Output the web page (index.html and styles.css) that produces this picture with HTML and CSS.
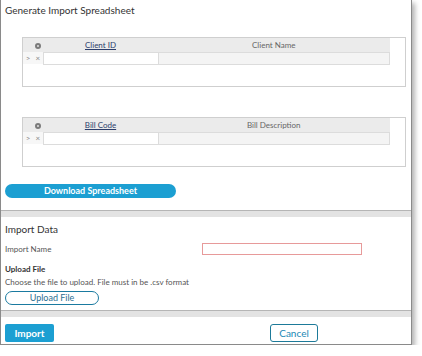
FILE: index.html
```html
<!DOCTYPE html>
<html>
  <head>
    <title>Import</title>
    <link rel="stylesheet" href="styles.css">
  </head>
  <body>
    <div class="dialog">
      <div class="section generate">
        <h2 class="title">Generate Import Spreadsheet</h2>

        <div class="grid-box">
          <table class="grid">
            <tr class="head">
              <th class="ctl"></th>
              <th class="ctl"><span class="gear"></span></th>
              <th class="col-a"><a href="#">Client ID</a></th>
              <th class="col-b">Client Name</th>
            </tr>
            <tr class="row">
              <td class="ctl">&gt;</td>
              <td class="ctl">&times;</td>
              <td class="cell-edit"></td>
              <td class="cell-ro"></td>
            </tr>
          </table>
        </div>

        <div class="grid-box second">
          <table class="grid">
            <tr class="head">
              <th class="ctl"></th>
              <th class="ctl"><span class="gear"></span></th>
              <th class="col-a"><a href="#">Bill Code</a></th>
              <th class="col-b">Bill Description</th>
            </tr>
            <tr class="row">
              <td class="ctl">&gt;</td>
              <td class="ctl">&times;</td>
              <td class="cell-edit"></td>
              <td class="cell-ro"></td>
            </tr>
          </table>
        </div>

        <button class="btn-pill">Download Spreadsheet</button>
      </div>

      <div class="divider"></div>

      <div class="section import">
        <h2 class="title">Import Data</h2>
        <div class="field-row">
          <label class="field-label">Import Name</label>
          <input class="text-input" type="text">
        </div>
        <div class="upload-label">Upload File</div>
        <div class="hint">Choose the file to upload. File must in be .csv format</div>
        <button class="btn-outline">Upload File</button>
      </div>

      <div class="divider"></div>

      <div class="footer">
        <button class="btn-primary">Import</button>
        <button class="btn-cancel">Cancel</button>
      </div>
    </div>
  </body>
</html>
```

FILE: styles.css
```css
body {
  margin: 0;
  background: #fff;
  font-family: Lato, "Liberation Sans", sans-serif;
  color: #333;
}
.dialog {
  width: 410px;
  border: 1px solid #8a8a8a;
  border-top: none;
  box-shadow: 3px 3px 5px rgba(0, 0, 0, 0.3);
  background: #fff;
}
.section {
  padding: 3px 4px 0 4px;
}
.title {
  margin: 0;
  font-size: 10px;
  font-weight: normal;
  line-height: 14px;
  color: #333;
}
.grid-box {
  margin: 20px 0 0 17px;
  width: 382px;
  height: 48px;
  border: 1px solid #cfcfcf;
}
.grid-box.second {
  margin-top: 30px;
}
.grid {
  border-collapse: collapse;
  width: 367px;
  table-layout: fixed;
}
.grid th,
.grid td {
  padding: 0;
  font-size: 8px;
  font-weight: normal;
  text-align: center;
  white-space: nowrap;
}
.head {
  height: 14px;
  background: #ebebeb;
}
.head .col-a a {
  color: #2c3e6b;
  text-decoration: underline;
}
.head .col-b {
  color: #666;
}
.ctl {
  width: 10px;
  color: #888;
}
.col-a {
  width: 115px;
}
.row {
  height: 12px;
}
.row .ctl {
  background: #f7f7f7;
  font-size: 8px;
  line-height: 10px;
}
.cell-edit {
  background: #fff;
  border: 1px solid #dcdcdc;
}
.cell-ro {
  background: #f4f4f4;
  border: 1px solid #dcdcdc;
}
.gear {
  display: inline-block;
  width: 2px;
  height: 2px;
  border: 2px solid #7a7a7a;
  border-radius: 50%;
  background: #e0e0e0;
  vertical-align: middle;
}
.btn-pill {
  display: block;
  margin-top: 17px;
  width: 171px;
  height: 14px;
  padding: 0;
  border: none;
  border-radius: 7px;
  background: #1c9fd2;
  color: #fff;
  font-family: Lato, "Liberation Sans", sans-serif;
  font-size: 9px;
  font-weight: bold;
  line-height: 14px;
}
.generate {
  padding-bottom: 12px;
}
.divider {
  height: 6px;
  border-top: 1px solid #b5b5b5;
  background: #e3e3e3;
}
.import {
  padding-top: 5px;
  padding-bottom: 5px;
}
.field-row {
  display: flex;
  align-items: center;
  margin-top: 7px;
  height: 12px;
}
.field-label {
  width: 197px;
  font-size: 8px;
  color: #555;
}
.text-input {
  box-sizing: border-box;
  width: 160px;
  height: 12px;
  margin: 0;
  padding: 0;
  border: 1px solid #e79a9a;
}
.upload-label {
  margin-top: 8px;
  font-size: 8px;
  font-weight: bold;
  line-height: 12px;
}
.hint {
  margin-top: 1px;
  font-size: 8px;
  line-height: 12px;
  color: #555;
}
.btn-outline {
  display: block;
  margin-top: 3px;
  width: 94px;
  height: 14px;
  padding: 0;
  border: 1px solid #1a7aa0;
  border-radius: 7px;
  background: #fff;
  color: #2b6f92;
  font-family: Lato, "Liberation Sans", sans-serif;
  font-size: 9px;
  line-height: 12px;
}
.footer {
  display: flex;
  justify-content: space-between;
  padding: 7px 93px 2px 4px;
}
.btn-primary {
  width: 49px;
  height: 18px;
  padding: 0;
  border: none;
  border-radius: 2px;
  background: #1c9fd2;
  color: #fff;
  font-family: Lato, "Liberation Sans", sans-serif;
  font-size: 10px;
  font-weight: bold;
}
.btn-cancel {
  width: 48px;
  height: 18px;
  padding: 0;
  border: 1px solid #1d7a99;
  border-radius: 3px;
  background: #fff;
  color: #1a88b5;
  font-family: Lato, "Liberation Sans", sans-serif;
  font-size: 10px;
}
```
